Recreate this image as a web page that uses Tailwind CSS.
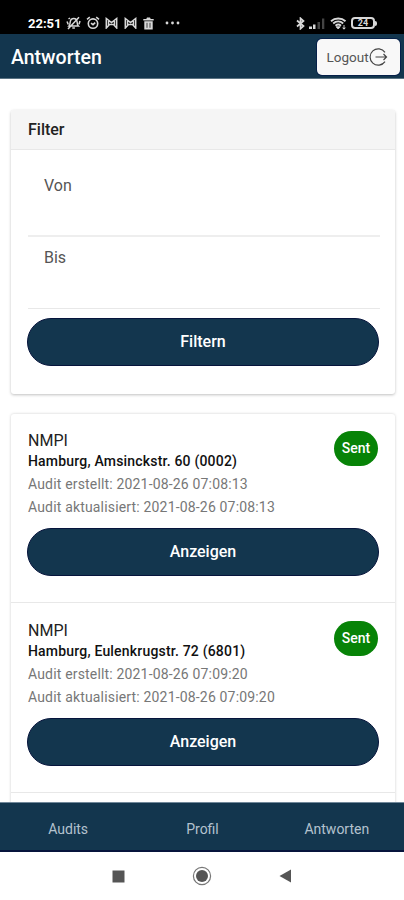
<!DOCTYPE html>
<html lang="de">
<head>
    <meta charset="UTF-8">
    <meta name="viewport" content="width=device-width, initial-scale=1.0">
    <title>Antworten</title>
    <script src="https://cdn.jsdelivr.net/npm/@tailwindcss/browser@4"></script>
</head>
<body class="bg-white font-['Roboto',sans-serif]">
<div class="flex flex-col w-[404px] h-[900px] overflow-hidden">
    <!-- Statusleiste -->
    <div class="h-[34px] shrink-0 bg-black flex items-center justify-between pl-7 pr-[27px] pt-[12px] text-[#d8d8d8]">
        <div class="flex items-center">
            <span class="w-[33px] text-[13px] leading-none font-bold text-white">22:51</span>
            <svg class="w-[15px] h-[14px] ml-[5px]" viewBox="0 0 15 14" fill="none" stroke="currentColor" stroke-width="1.5">
                <path d="M3 10c1-1 1-2 1.200-4 .3-2 1.600-3.500 3.500-3.500 2 0 3.200 1.500 3.400 3.500.1 2 .3 3 1.300 4zM6.300 12h2.600M2 13L13 1.200M1 5.500l1.300 3M14 5l-1 3.200M2.500 3l1.500-1"/>
            </svg>
            <svg class="w-[14px] h-[14px] ml-[5px]" viewBox="0 0 14 14" fill="none" stroke="currentColor" stroke-width="1.600">
                <circle cx="7" cy="7.600" r="4.700"/>
                <path d="M1 3.400L3.800 1.200M13 3.400L10.200 1.200M5 7.200l2 1.500 2.200-2"/>
            </svg>
            <svg class="w-[13px] h-[12px] ml-[5px]" viewBox="0 0 13 12" fill="none" stroke="currentColor" stroke-width="1.500">
                <path d="M1.300 11V1.500l5.200 4 5.200-4V11L8.500 7.500h-4zM3.500 3v6M9.500 3v6"/>
            </svg>
            <svg class="w-[13px] h-[12px] ml-[6px]" viewBox="0 0 13 12" fill="none" stroke="currentColor" stroke-width="1.500">
                <path d="M1.300 11V1.500l5.200 4 5.200-4V11L8.500 7.500h-4zM3.500 3v6M9.500 3v6"/>
            </svg>
            <svg class="w-[11px] h-[13px] ml-[6px]" viewBox="0 0 11 13" fill="currentColor">
                <path d="M.3 2h3l.7-1.500h3L7.700 2h3v1.600H.3zM1.300 4.300h8.400V12.500H1.300z"/>
                <path d="M4 5.800v5M7 5.800v5" stroke="#000" stroke-width=".7"/>
            </svg>
            <svg class="w-[15px] h-[4px] ml-[11px]" viewBox="0 0 15 4" fill="currentColor">
                <circle cx="2" cy="2" r="1.400"/><circle cx="7.500" cy="2" r="1.400"/><circle cx="13" cy="2" r="1.400"/>
            </svg>
        </div>
        <div class="flex items-center">
            <svg class="w-[9px] h-[13px]" viewBox="0 0 9 13" fill="none" stroke="currentColor" stroke-width="1.700">
                <path d="M1 3.500l6.500 5.500-3 2.700V1.300l3 2.700L1 9.500"/>
            </svg>
            <svg class="w-[16px] h-[12px] ml-[4px]" viewBox="0 0 16 12" fill="currentColor">
                <path d="M0 9.500h3V12H0zM4 7.500h2.500V12H4z"/>
                <path fill="#444" d="M8.500 5H11v7H8.500zM13 1.500h2.300V12H13z"/>
            </svg>
            <svg class="w-[17px] h-[13px] ml-[5px]" viewBox="0 0 17 13" fill="none" stroke="currentColor" stroke-width="1.900">
                <path d="M1 4.200c4-3.600 10.500-3.600 14.500 0M3.200 6.500c3-2.600 7-2.600 10 0M5.500 8.700c1.700-1.400 3.900-1.400 5.500 0"/>
                <path d="M6.200 9.800h4L8.200 12zM14 8v4M12.600 10.700L14 12.200l1.400-1.500" fill="currentColor" stroke-width=".9"/>
            </svg>
            <div class="flex items-center ml-[4px]">
                <div class="w-[24px] h-[12px] border-2 border-[#d8d8d8] rounded-[4px] flex items-center justify-center text-[9px] font-bold leading-none">24</div>
                <div class="w-[2px] h-[5px] bg-[#d8d8d8] rounded-r"></div>
            </div>
        </div>
    </div>

    <!-- Kopfzeile -->
    <header class="h-[45px] shrink-0 bg-[#13364e] border-b border-[#5a7383] flex items-center justify-between pl-[11px] pr-[4px]">
        <h1 class="pt-[3px] text-white text-[19.5px] font-medium">Antworten</h1>
        <button class="w-[83px] h-[36px] mt-px bg-[#f8f8f8] rounded-[5px] flex items-center justify-center pr-[3px] pt-px text-[13.5px] text-[#555] ring-1 ring-[#06204a]">
            Logout
            <svg class="w-[19px] h-[20px]" viewBox="0 0 19 20" fill="none" stroke="#444" stroke-width="1.200">
                <path d="M16 5.300A8.200 8.200 0 1 0 16 14.700M6.500 10H17.500M14.500 7l3 3-3 3"/>
            </svg>
        </button>
    </header>

    <main class="flex-1 min-h-0 overflow-hidden pl-[11px] pr-[9px] pt-[31px]">
        <!-- Filter -->
        <section class="h-[284px] rounded-[3px] bg-white shadow-[0_1px_3px_rgba(0,0,0,0.25)]">
            <h2 class="h-10 px-[17px] bg-[#f5f5f5] border-b border-[#e8e8e8] rounded-t-[3px] flex items-center text-base font-medium text-[#222]">Filter</h2>
            <div class="pl-[17px] pr-[15px]">
                <div class="h-[87px] pl-[16px] pt-[24px] border-b-2 border-[#eee] text-base text-[#555]">Von</div>
                <div class="h-[72px] pl-[16px] pt-[9px] border-b border-[#e8e8e8] text-base text-[#555]">Bis</div>
                <button class="mt-[9px] -ml-px w-[352px] h-[48px] rounded-full bg-[#13364e] border border-[#06143c] text-white text-base font-medium">Filtern</button>
            </div>
        </section>

        <!-- Liste der Antworten -->
        <section class="mt-[20px] h-[500px] rounded-t-[3px] bg-white shadow-[0_0_3px_rgba(0,0,0,0.2)]">
            <article class="h-[189px] border-b border-[#e8e8e8] px-[17px] pt-[17px]">
                <div class="flex justify-between">
                    <div>
                        <p class="text-base leading-5 text-[#222]">NMPI</p>
                        <p class="text-[14px] leading-[21px] tracking-[0.19px] font-medium text-[#111]">Hamburg, Amsinckstr. 60 (0002)</p>
                        <p class="mt-px text-[14px] leading-[23px] tracking-[0.17px] text-[#777]">Audit erstellt: 2021-08-26 07:08:13</p>
                        <p class="text-[14px] leading-[23px] tracking-[0.17px] text-[#777]">Audit aktualisiert: 2021-08-26 07:08:13</p>
                    </div>
                    <span class="w-[44px] h-[35px] rounded-full bg-[#078307] flex items-center justify-center pb-px text-white text-[14px] font-medium">Sent</span>
                </div>
                <button class="mt-[9px] -ml-px w-[352px] h-[48px] rounded-full bg-[#13364e] border border-[#06143c] text-white text-base font-medium">Anzeigen</button>
            </article>
            <article class="h-[190px] border-b border-[#e8e8e8] px-[17px] pt-[18px]">
                <div class="flex justify-between">
                    <div>
                        <p class="text-base leading-5 text-[#222]">NMPI</p>
                        <p class="text-[14px] leading-[21px] tracking-[0.19px] font-medium text-[#111]">Hamburg, Eulenkrugstr. 72 (6801)</p>
                        <p class="mt-px text-[14px] leading-[23px] tracking-[0.17px] text-[#777]">Audit erstellt: 2021-08-26 07:09:20</p>
                        <p class="text-[14px] leading-[23px] tracking-[0.17px] text-[#777]">Audit aktualisiert: 2021-08-26 07:09:20</p>
                    </div>
                    <span class="w-[44px] h-[35px] rounded-full bg-[#078307] flex items-center justify-center pb-px text-white text-[14px] font-medium">Sent</span>
                </div>
                <button class="mt-[9px] -ml-px w-[352px] h-[48px] rounded-full bg-[#13364e] border border-[#06143c] text-white text-base font-medium">Anzeigen</button>
            </article>
        </section>
    </main>

    <!-- Tab-Leiste -->
    <nav class="h-[50px] shrink-0 bg-[#13364e] border-t border-t-[#71889a] border-b-2 border-b-[#06143c] grid grid-cols-3 items-center pt-[5px] pl-px text-center text-[14px] text-[#b3c2ce]">
        <a>Audits</a>
        <a>Profil</a>
        <a>Antworten</a>
    </nav>

    <!-- Android-Navigation -->
    <div class="h-[48px] shrink-0 bg-white flex items-center pl-[112px]">
        <svg class="w-[13px] h-[13px]" viewBox="0 0 13 13"><path fill="#555" d="M.5.5h12v12H.5z"/></svg>
        <svg class="w-[20px] h-[20px] ml-[67px]" viewBox="0 0 20 20">
            <circle cx="10" cy="10" r="8.600" fill="none" stroke="#777" stroke-width="1.200"/>
            <circle cx="10" cy="10" r="6" fill="#555"/>
        </svg>
        <svg class="w-[13px] h-[14px] ml-[67px]" viewBox="0 0 13 14"><path fill="#555" d="M12 .5v13L.5 7z"/></svg>
    </div>
</div>
</body>
</html>
